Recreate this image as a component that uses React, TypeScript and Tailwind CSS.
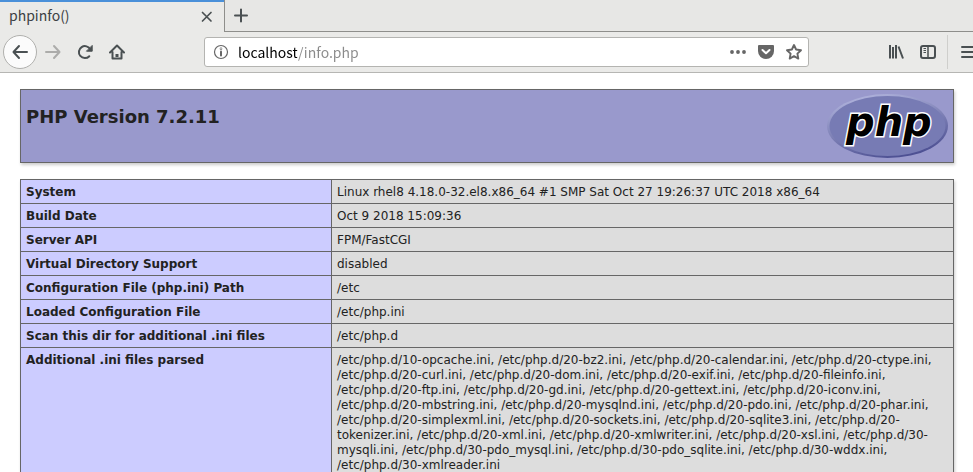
import React, { useState } from 'react';

interface InfoRow {
  label: string;
  value: string;
}

const rows: InfoRow[] = [
  { label: 'System', value: 'Linux rhel8 4.18.0-32.el8.x86_64 #1 SMP Sat Oct 27 19:26:37 UTC 2018 x86_64' },
  { label: 'Build Date', value: 'Oct 9 2018 15:09:36' },
  { label: 'Server API', value: 'FPM/FastCGI' },
  { label: 'Virtual Directory Support', value: 'disabled' },
  { label: 'Configuration File (php.ini) Path', value: '/etc' },
  { label: 'Loaded Configuration File', value: '/etc/php.ini' },
  { label: 'Scan this dir for additional .ini files', value: '/etc/php.d' },
  {
    label: 'Additional .ini files parsed',
    value:
      '/etc/php.d/10-opcache.ini, /etc/php.d/20-bz2.ini, /etc/php.d/20-calendar.ini, /etc/php.d/20-ctype.ini, /etc/php.d/20-curl.ini, /etc/php.d/20-dom.ini, /etc/php.d/20-exif.ini, /etc/php.d/20-fileinfo.ini, /etc/php.d/20-ftp.ini, /etc/php.d/20-gd.ini, /etc/php.d/20-gettext.ini, /etc/php.d/20-iconv.ini, /etc/php.d/20-mbstring.ini, /etc/php.d/20-mysqlnd.ini, /etc/php.d/20-pdo.ini, /etc/php.d/20-phar.ini, /etc/php.d/20-simplexml.ini, /etc/php.d/20-sockets.ini, /etc/php.d/20-sqlite3.ini, /etc/php.d/20-tokenizer.ini, /etc/php.d/20-xml.ini, /etc/php.d/20-xmlwriter.ini, /etc/php.d/20-xsl.ini, /etc/php.d/30-mysqli.ini, /etc/php.d/30-pdo_mysql.ini, /etc/php.d/30-pdo_sqlite.ini, /etc/php.d/30-wddx.ini, /etc/php.d/30-xmlreader.ini',
  },
];

function Icon({ children }: { children: React.ReactNode }) {
  return (
    <svg viewBox="0 0 16 16" className="size-4 shrink-0" fill="none" stroke="currentColor" strokeWidth="2" strokeLinecap="round" strokeLinejoin="round" aria-hidden="true">
      {children}
    </svg>
  );
}

function PhpLogo() {
  return (
    <svg viewBox="0 0 121 64" className="h-16 w-[121px] shrink-0" role="img" aria-label="PHP logo">
      <defs>
        <linearGradient id="rim" x1="0.3" y1="0" x2="0.7" y2="1">
          <stop offset="0" stopColor="#b0b3dc" />
          <stop offset="0.45" stopColor="#8285b9" />
          <stop offset="1" stopColor="#484b8f" />
        </linearGradient>
      </defs>
      <ellipse cx="60.5" cy="32" rx="60.5" ry="32" fill="url(#rim)" />
      <ellipse cx="60.5" cy="32" rx="58" ry="30" fill="#777bb4" />
      <text
        x="19"
        y="42"
        fontSize="40"
        className="font-['DejaVu_Sans',sans-serif] font-bold italic"
        fill="#000"
        stroke="#fff"
        strokeWidth="3"
        strokeLinejoin="miter"
        paintOrder="stroke"
      >
        php
      </text>
    </svg>
  );
}

export default function App() {
  const [url, setUrl] = useState('localhost/info.php');

  return (
    <div className="flex h-screen flex-col overflow-hidden bg-white font-['DejaVu_Sans',sans-serif] text-[#222]">
      {/* Browser chrome */}
      <header className="shrink-0 border-b border-[#b6b6b3] bg-[#eaeae8] font-['Noto_Sans_CJK_JP',sans-serif] text-[#4a5052]">
        <div className="flex h-8">
          <div className="flex w-[224px] items-center justify-between border-t-2 border-[#4a90d9] pr-[9px] pl-[9px]">
            <span className="pb-1 text-sm leading-5 text-[#3c4143]">phpinfo()</span>
            <button type="button" aria-label="Close tab">
              <Icon>
                <path d="M3.500 3.500l8.500 8.500M12 3.500l-8.500 8.500" strokeWidth="1.700" />
              </Icon>
            </button>
          </div>
          <div className="flex flex-1 items-center border-b border-l border-[#8e8e8b] bg-[#e7e7e5] pl-2">
            <button type="button" aria-label="New tab">
              <Icon>
                <path d="M8 1.500v12M2 7.500h12" />
              </Icon>
            </button>
          </div>
        </div>

        <div className="flex h-10 items-center overflow-hidden pl-[3px]">
          <button type="button" aria-label="Back" className="flex size-[34px] shrink-0 items-center justify-center rounded-full border border-[#b0b0ad] bg-[#fbfbfb]">
            <Icon>
              <path d="M15 8H2M7 2L1.500 8L7 14" />
            </Icon>
          </button>
          <div className="ml-2 flex gap-4">
            <button type="button" aria-label="Forward" className="text-[#acacaa]">
              <Icon>
                <path d="M1 8h13M9 2l5.500 6L9 14" />
              </Icon>
            </button>
            <button type="button" aria-label="Reload">
              <Icon>
                <path d="M12.300 12.200A6 6 0 1 1 13.300 5.500" />
                <path d="M15.200 1.800V7.200H9.800z" fill="currentColor" strokeWidth="1" />
              </Icon>
            </button>
            <button type="button" aria-label="Home">
              <Icon>
                <path d="M1 8.500L8 1.500L15 8.500M3.500 8v6.500h9V8" />
                <path d="M8 10v3" strokeWidth="3" strokeLinecap="butt" />
              </Icon>
            </button>
          </div>

          <div className="ml-[79px] flex h-[30px] flex-1 items-center rounded-[3px] border border-[#b4b4b1] bg-white pr-1.5 pl-2 text-[#666]">
            <Icon>
              <circle cx="8" cy="8" r="6.500" strokeWidth="1.200" />
              <path d="M8 7.500v4" />
              <circle cx="8" cy="4.700" r="0.300" />
            </Icon>
            <input
              type="text"
              aria-label="Address"
              value={url}
              onChange={(e) => setUrl(e.target.value)}
              className="ml-[9px] min-w-0 flex-1 bg-[linear-gradient(to_right,#000_59px,#8a8a8a_59px)] bg-clip-text text-sm leading-5 text-transparent caret-black outline-none"
            />
            <div className="flex gap-3">
              <button type="button" aria-label="Page actions">
                <Icon>
                  <path d="M2 8h0.010M8 8h0.010M14 8h0.010" strokeWidth="3.800" />
                </Icon>
              </button>
              <button type="button" aria-label="Save to Pocket">
                <Icon>
                  <path d="M1 1h14a1 1 0 0 1 1 1v5a8 8 0 0 1-16 0V2a1 1 0 0 1 1-1z" fill="currentColor" stroke="none" />
                  <path d="M4.500 6L8 9.300L11.500 6" stroke="#fff" />
                </Icon>
              </button>
              <button type="button" aria-label="Bookmark this page">
                <Icon>
                  <path d="M8 1l2.100 4.500 4.900 0.700-3.600 3.400 0.900 5L8 12.200l-4.300 2.400 0.900-5L1 6.200 5.900 5.500z" strokeWidth="1.900" />
                </Icon>
              </button>
            </div>
          </div>

          <div className="ml-[79px] flex gap-4">
            <button type="button" aria-label="Library">
              <Icon>
                <path d="M2 1v13.500M5 3v11.500M8 1v13.500M10.500 2.500l4.500 12" strokeLinecap="butt" />
              </Icon>
            </button>
            <button type="button" aria-label="Sidebars">
              <Icon>
                <rect x="1" y="2" width="14" height="12" rx="2" />
                <path d="M8 2v12" strokeWidth="1.500" />
                <path d="M3.500 4.500H6M3.500 6.500H6M3.500 8.500H6" strokeWidth="1" strokeLinecap="butt" />
              </Icon>
            </button>
          </div>
          <div className="-mr-1 ml-[11px] flex h-[34px] items-center border-l border-[#cfcfcc] pl-[13px]">
            <button type="button" aria-label="Open menu">
              <Icon>
                <path d="M1 3h14M1 8h14M1 13h14" />
              </Icon>
            </button>
          </div>
        </div>
      </header>

      {/* Page content */}
      <main className="pt-4 pr-[19px] pl-5">
        <div className="flex items-start justify-between border border-[#666] bg-[#9999cc] px-[5px] py-1 shadow-[1px_2px_3px_#ccc]">
          <h1 className="mt-[9px] text-lg leading-7 font-bold">PHP Version 7.2.11</h1>
          <PhpLogo />
        </div>

        <table className="mt-4 w-full border-collapse text-left text-xs leading-[15px] shadow-[1px_2px_3px_#ccc]">
          <tbody>
            {rows.map((row) => (
              <tr key={row.label}>
                <th scope="row" className="w-[311px] border border-[#666] bg-[#ccccff] px-[5px] pt-[5px] pb-[3px] align-top font-bold">
                  {row.label}
                </th>
                <td className="border border-[#666] bg-[#dddddd] px-[5px] pt-[5px] pb-[3px] align-top">{row.value}</td>
              </tr>
            ))}
          </tbody>
        </table>
      </main>
    </div>
  );
}
